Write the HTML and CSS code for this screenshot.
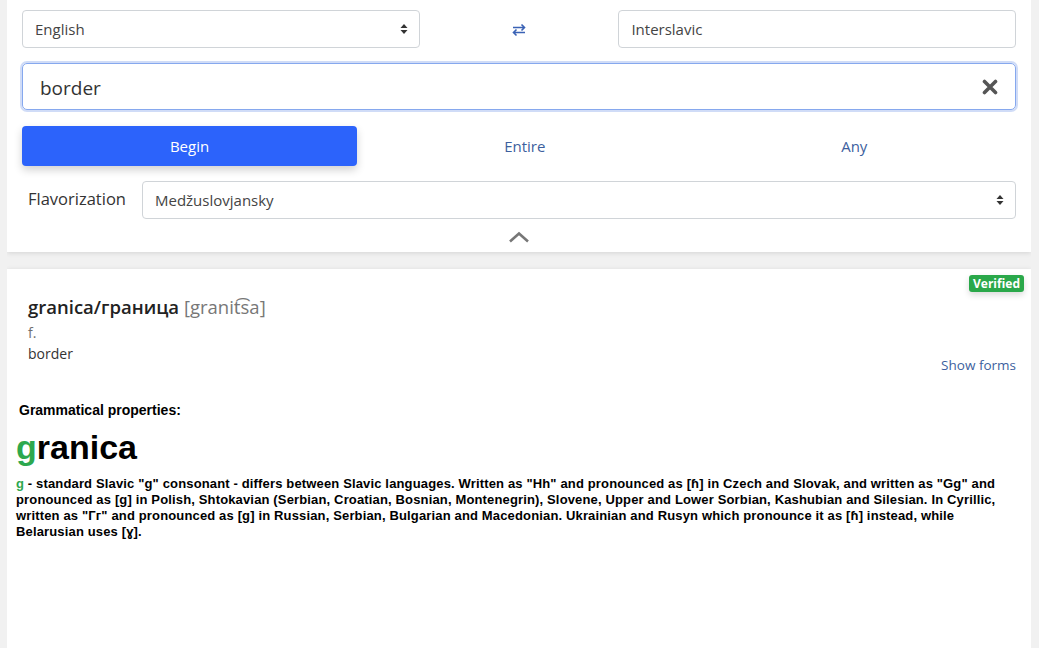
FILE: index.html
```html
<!DOCTYPE html>
<html lang="en">
<head>
    <meta charset="UTF-8">
    <meta name="viewport" content="width=device-width, initial-scale=1.0">
    <title>Interslavic dictionary</title>
    <link rel="stylesheet" href="styles.css">
</head>
<body>
    <!-- Search panel -->
    <div class="card search-card">
        <div class="lang-row">
            <div class="field select-field">
                <span>English</span>
                <svg class="updown" width="8" height="12" viewBox="0 0 8 12"><path d="M0.5 5 L4 1 L7.5 5 Z M0.5 7 L4 11 L7.5 7 Z" fill="#333"/></svg>
            </div>
            <div class="swap">
                <svg width="14" height="14" viewBox="0 0 14 14" fill="none" stroke="#3a62b5" stroke-width="1.6">
                    <path d="M1 4.5 H12.5 M9.5 1.5 L12.5 4.5 L9.5 7.5"/>
                    <path d="M13 9.5 H1.5 M4.5 6.5 L1.5 9.5 L4.5 12.5"/>
                </svg>
            </div>
            <div class="field">
                <span>Interslavic</span>
            </div>
        </div>

        <div class="search-box">
            <span class="query">border</span>
            <svg class="clear" width="16" height="16" viewBox="0 0 16 16"><path d="M2.5 2.5 L13.5 13.5 M13.5 2.5 L2.5 13.5" stroke="#555" stroke-width="3.6" stroke-linecap="round"/></svg>
        </div>

        <div class="mode-row">
            <div class="mode active">Begin</div>
            <div class="mode">Entire</div>
            <div class="mode">Any</div>
        </div>

        <div class="flavor-row">
            <label>Flavorization</label>
            <div class="field select-field">
                <span>Medžuslovjansky</span>
                <svg class="updown" width="8" height="12" viewBox="0 0 8 12"><path d="M0.5 5 L4 1 L7.5 5 Z M0.5 7 L4 11 L7.5 7 Z" fill="#333"/></svg>
            </div>
        </div>

        <div class="collapse">
            <svg width="22" height="12" viewBox="0 0 22 12" fill="none"><path d="M2 10.5 L11 2.5 L20 10.5" stroke="#777" stroke-width="2.6"/></svg>
        </div>
    </div>

    <!-- Result -->
    <div class="card result-card">
        <span class="badge">Verified</span>
        <div class="result-head">
            <div class="word">granica/граница <span class="ipa">[granit͡sa]</span></div>
            <div class="pos">f.</div>
            <div class="translation">border</div>
            <div class="show-forms">Show forms</div>
        </div>

        <div class="grammar">
            <div class="grammar-title">Grammatical properties:</div>
            <div class="big-word"><span class="green">g</span>ranica</div>
            <p><span class="green">g</span> - standard Slavic "g" consonant - differs between Slavic languages. Written as "Hh" and pronounced as [ɦ] in Czech and Slovak, and written as "Gg" and pronounced as [g] in Polish, Shtokavian (Serbian, Croatian, Bosnian, Montenegrin), Slovene, Upper and Lower Sorbian, Kashubian and Silesian. In Cyrillic, written as "Гг" and pronounced as [g] in Russian, Serbian, Bulgarian and Macedonian. Ukrainian and Rusyn which pronounce it as [ɦ] instead, while Belarusian uses [ɣ].</p>
        </div>
    </div>
</body>
</html>
```

FILE: styles.css
```css
/* General */
body {
    margin: 0 8px 0 7px;
    background-color: #f1f1f1;
    font-family: "Open Sans", "Noto Sans", sans-serif;
    color: #212529;
    overflow: hidden;
}

.card {
    background-color: #fff;
    box-shadow: 0 1px 5px rgba(0, 0, 0, 0.12);
}

/* Search panel */
.search-card {
    padding: 10px 15px 5px 15px;
}

.lang-row {
    display: grid;
    grid-template-columns: 2fr 1fr 2fr;
    align-items: center;
}

.field {
    height: 36px;
    border: 1px solid #d0d4d8;
    border-radius: 4px;
    display: flex;
    align-items: center;
    justify-content: space-between;
    padding: 0 12px;
    font-size: 15px;
    color: #444;
}

.select-field .updown {
    margin-right: -1px;
}

.swap {
    display: flex;
    justify-content: center;
    padding-top: 2px;
}

.search-box {
    margin-top: 15px;
    height: 45px;
    border: 1px solid #86a8ee;
    border-radius: 5px;
    box-shadow: 0 0 0 2px rgba(100, 140, 230, 0.3);
    display: flex;
    align-items: center;
    justify-content: space-between;
    padding: 0 17px 0 17px;
}

.query {
    font-size: 19px;
    color: #333;
    margin-top: 2px;
}

.mode-row {
    margin-top: 16px;
    display: grid;
    grid-template-columns: 335px 1fr 1fr;
}

.mode {
    height: 40px;
    display: flex;
    align-items: center;
    justify-content: center;
    font-size: 15px;
    color: #3d5f9e;
    padding-left: 6px;
}

.mode.active {
    background-color: #2c63fb;
    color: #fff;
    border-radius: 4px;
    box-shadow: 0 4px 8px rgba(0, 0, 0, 0.18);
    padding-left: 0;
}

.flavor-row {
    margin-top: 15px;
    display: flex;
    align-items: center;
}

.flavor-row label {
    font-size: 16.5px;
    color: #333;
    width: 114px;
    padding-left: 6px;
    margin-top: -3px;
}

.flavor-row .field {
    flex: 1;
}

.collapse {
    display: flex;
    justify-content: center;
    margin-top: 12px;
    height: 16px;
}

/* Result */
.result-card {
    margin-top: 17px;
    position: relative;
    height: 400px;
}

.badge {
    position: absolute;
    top: 6px;
    right: 7px;
    background-color: #2aa84a;
    color: #fff;
    font-size: 12px;
    font-weight: bold;
    padding: 0 4px;
    height: 17px;
    line-height: 17px;
    border-radius: 3px;
    box-shadow: 0 3px 6px rgba(0, 0, 0, 0.15);
}

.result-head {
    padding: 25px 15px 0 21px;
}

.word {
    font-size: 18.5px;
    font-weight: 600;
    color: #222;
    line-height: 26px;
}

.ipa {
    color: #777;
    font-weight: normal;
}

.pos {
    font-size: 14px;
    color: #707070;
    line-height: 21px;
    margin-top: 2px;
}

.translation {
    font-size: 14px;
    color: #333;
    line-height: 21px;
}

.show-forms {
    text-align: right;
    font-size: 13.5px;
    color: #3d5f9e;
    margin-top: -8px;
}

.grammar {
    padding: 28px 25px 0 9px;
    font-family: "Liberation Sans", Arial, sans-serif;
    color: #000;
}

.grammar-title {
    font-size: 14px;
    font-weight: bold;
    padding-left: 3px;
}

.big-word {
    font-size: 34px;
    font-weight: bold;
    line-height: 40px;
    margin-top: 9px;
}

.green {
    color: #2da84e;
}

.grammar p {
    margin: 9px 0 0 0;
    font-size: 13px;
    font-weight: bold;
    line-height: 16px;
    letter-spacing: 0.15px;
}
```
